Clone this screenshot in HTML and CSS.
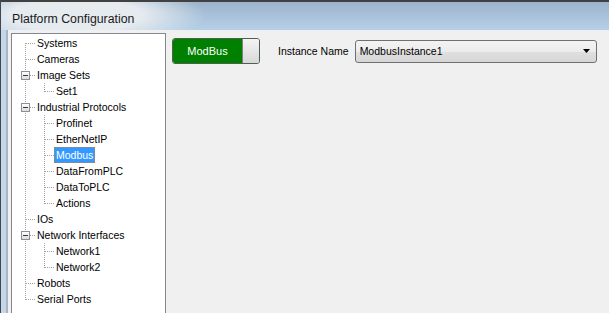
FILE: index.html
```html
<!DOCTYPE html>
<html>
<head>
<meta charset="utf-8">
<link rel="stylesheet" href="styles.css">
</head>
<body>
<div class="window">
  <div class="titlebar"><span class="title">Platform Configuration</span></div>
  <div class="frame">
    <div class="edge"></div>
    <div class="client">
      <div class="tree">
        <div class="row"><span class="gutter start"></span><span class="label">Systems</span></div>
        <div class="row"><span class="gutter"></span><span class="label">Cameras</span></div>
        <div class="row"><span class="gutter exp"><span class="box"></span></span><span class="label">Image Sets</span></div>
        <div class="row"><span class="gutter none"></span><span class="gutter sub end"></span><span class="label">Set1</span></div>
        <div class="row"><span class="gutter exp"><span class="box"></span></span><span class="label">Industrial Protocols</span></div>
        <div class="row"><span class="gutter none"></span><span class="gutter sub"></span><span class="label">Profinet</span></div>
        <div class="row"><span class="gutter none"></span><span class="gutter sub"></span><span class="label">EtherNetIP</span></div>
        <div class="row"><span class="gutter none"></span><span class="gutter sub"></span><span class="label sel">Modbus</span></div>
        <div class="row"><span class="gutter none"></span><span class="gutter sub"></span><span class="label">DataFromPLC</span></div>
        <div class="row"><span class="gutter none"></span><span class="gutter sub"></span><span class="label">DataToPLC</span></div>
        <div class="row"><span class="gutter none"></span><span class="gutter sub end"></span><span class="label">Actions</span></div>
        <div class="row"><span class="gutter"></span><span class="label">IOs</span></div>
        <div class="row"><span class="gutter exp"><span class="box"></span></span><span class="label">Network Interfaces</span></div>
        <div class="row"><span class="gutter none"></span><span class="gutter sub"></span><span class="label">Network1</span></div>
        <div class="row"><span class="gutter none"></span><span class="gutter sub end"></span><span class="label">Network2</span></div>
        <div class="row"><span class="gutter"></span><span class="label">Robots</span></div>
        <div class="row"><span class="gutter end"></span><span class="label">Serial Ports</span></div>
      </div>
      <div class="main">
        <div class="toolbar">
          <div class="toggle"><span class="toggle-on">ModBus</span><span class="toggle-thumb"></span></div>
          <span class="field-label">Instance Name</span>
          <div class="combo">
            <span class="combo-text">ModbusInstance1</span>
            <svg class="combo-arrow" width="7" height="4" viewBox="0 0 7 4"><polygon points="0,0 7,0 3.5,4" fill="#000"/></svg>
          </div>
        </div>
      </div>
    </div>
  </div>
</div>
</body>
</html>
```
FILE: styles.css
```css
* { box-sizing: border-box; }
html, body { margin: 0; height: 100%; overflow: hidden; }
body {
  font-family: "Liberation Sans", Arial, sans-serif;
  font-size: 10.5px;
  color: #000;
  background: #f0f0f0;
}
.window {
  width: 609px;
  height: 313px;
  display: flex;
  flex-direction: column;
  border-left: 1px solid #3f4850;
  overflow: hidden;
}
.titlebar {
  height: 30px;
  flex: none;
  border-top: 2px solid #414141;
  padding: 10px 0 0 11px;
  background:
    radial-gradient(ellipse 130px 32px at 75px 13px, rgba(230,235,240,1) 50%, rgba(230,235,240,0) 100%),
    linear-gradient(#9bb4cb, #b6d0e7);
}
.title {
  font-size: 12.3px;
  line-height: 14px;
  color: #1a1a1a;
}
.frame { flex: 1; display: flex; min-height: 0; }
.edge {
  width: 7px;
  flex: none;
  background: linear-gradient(to right, #c3d6ea 0 5px, #a9b4bf 5px 7px);
}
.client {
  flex: 1;
  display: flex;
  align-items: flex-start;
  padding: 3px 0 0 3px;
  overflow: hidden;
}
.tree {
  width: 155px;
  height: 282px;
  flex: none;
  border: 1px solid #828790;
  background: #fff;
  padding-top: 1px;
}
.row {
  display: flex;
  height: 16px;
  line-height: 16px;
  white-space: nowrap;
}
.gutter {
  position: relative;
  flex: none;
  width: 23px;
  height: 16px;
}
.gutter.sub { width: 19px; }
.gutter::before {
  content: "";
  position: absolute;
  left: 13px;
  top: 0;
  bottom: 0;
  width: 1px;
  background: repeating-linear-gradient(to bottom, #a0a0a0 0 1px, transparent 1px 2px);
}
.gutter::after {
  content: "";
  position: absolute;
  left: 14px;
  top: 8px;
  width: 9px;
  height: 1px;
  background: repeating-linear-gradient(to right, #a0a0a0 0 1px, transparent 1px 2px);
}
.gutter.sub::before { left: 9px; }
.gutter.sub::after { left: 10px; }
.gutter.none::after { display: none; }
.gutter.start::before { top: 8px; }
.gutter.end::before { bottom: 7px; }
.gutter.exp::after { left: 18px; width: 5px; }
.box {
  position: absolute;
  left: 9px;
  top: 4px;
  width: 9px;
  height: 9px;
  border: 1px solid #8f8f8f;
  background: linear-gradient(#ffffff, #dcdcdc);
}
.box::before {
  content: "";
  position: absolute;
  left: 1px;
  top: 3px;
  width: 5px;
  height: 1px;
  background: #1e3a5f;
}
.label { padding: 0 2px; }
.label.sel {
  background: #3399ff;
  color: #fff;
  outline: 1px dotted #c08040;
  outline-offset: -1px;
}
.main {
  flex: 1;
  padding: 5px 0 0 6px;
}
.toolbar {
  display: flex;
  align-items: center;
}
.toggle {
  display: flex;
  width: 88px;
  height: 26px;
  border: 1px solid #4f5f4f;
  border-radius: 3px;
  overflow: hidden;
}
.toggle-on {
  flex: 1;
  background: #008000;
  color: #fff;
  font-size: 11px;
  display: flex;
  align-items: center;
  justify-content: center;
}
.toggle-thumb {
  width: 17px;
  flex: none;
  border-left: 1px solid #7f7f7f;
  background: linear-gradient(#f4f4f4, #d8d8d8);
}
.field-label { margin-left: 18px; }
.combo {
  margin-left: 6px;
  width: 242px;
  height: 23px;
  border: 1px solid #707070;
  border-radius: 3px;
  display: flex;
  align-items: center;
  justify-content: space-between;
  padding: 0 6px 0 4px;
  background: linear-gradient(#f3f3f3 0%, #ececec 50%, #e0e0e0 50%, #d6d6d6 100%);
}
.combo-arrow { display: block; }
```
